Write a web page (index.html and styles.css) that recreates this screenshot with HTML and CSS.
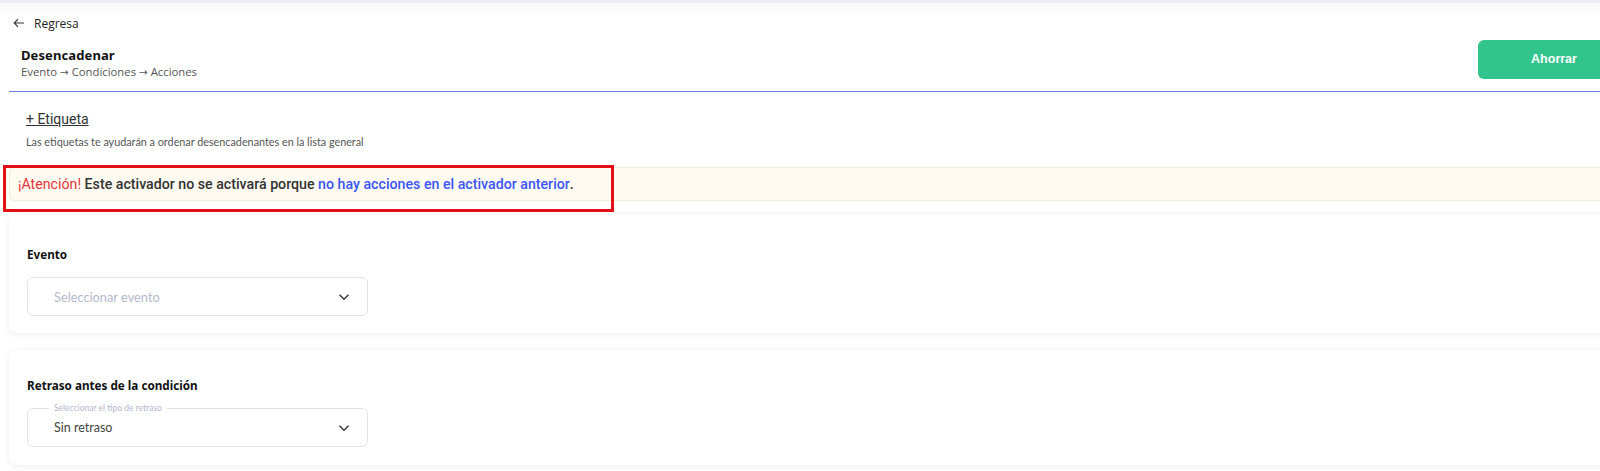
FILE: index.html
```html
<!DOCTYPE html>
<html lang="es">
<head>
<meta charset="utf-8">
<title>Desencadenar</title>
<link rel="stylesheet" href="styles.css">
</head>
<body>
<div class="topstrip"></div>
<div class="page">
  <a class="back" href="#">
    <svg class="back-icon" width="12" height="10" viewBox="0 0 12 10"><path d="M11 5H1.5M5 1.2L1.2 5 5 8.8" fill="none" stroke="#333" stroke-width="1.1"/></svg>
    <span>Regresa</span>
  </a>
  <div class="header">
    <div class="title-block">
      <div class="title">Desencadenar</div>
      <div class="crumbs">Evento <span class="arr">→</span> Condiciones <span class="arr">→</span> Acciones</div>
    </div>
    <button class="save">Ahorrar</button>
  </div>
  <div class="tags">
    <a class="tag-link" href="#">+ Etiqueta</a>
    <div class="tag-help">Las etiquetas te ayudarán a ordenar desencadenantes en la lista general</div>
  </div>
  <div class="warning-wrap">
    <div class="warning"><span class="w-red">¡Atención!</span> Este activador no se activará porque <span class="w-blue">no hay acciones en el activador anterior</span>.</div>
    <div class="annot"></div>
  </div>
  <div class="card card-first">
    <div class="card-title">Evento</div>
    <div class="select">
      <span class="placeholder">Seleccionar evento</span>
      <svg class="chev" width="12" height="8" viewBox="0 0 12 8"><path d="M1.5 1.8L6 6.2 10.5 1.8" fill="none" stroke="#3a3a48" stroke-width="1.5"/></svg>
    </div>
  </div>
  <div class="card card-second">
    <div class="card-title">Retraso antes de la condición</div>
    <div class="select outlined">
      <span class="legend">Seleccionar el tipo de retraso</span>
      <span class="value">Sin retraso</span>
      <svg class="chev" width="12" height="8" viewBox="0 0 12 8"><path d="M1.5 1.8L6 6.2 10.5 1.8" fill="none" stroke="#3a3a48" stroke-width="1.5"/></svg>
    </div>
  </div>
</div>
</body>
</html>
```
FILE: styles.css
```css
* { box-sizing: border-box; }
html, body { margin: 0; padding: 0; background: #ffffff; overflow: hidden; }
body { width: 1600px; height: 471px; font-family: "Open Sans", "Liberation Sans", sans-serif; color: #333; }

.topstrip {
  height: 11px;
  background: #fafafa;
  border-top: 3px solid #ededf5;
}

.page {
  width: 1640px;
  padding-left: 9px;
}

.back {
  display: flex;
  align-items: center;
  gap: 9px;
  height: 24px;
  margin-left: 4px;
  text-decoration: none;
  color: #222;
  font-size: 12px;
}
.back-icon { display: block; }

.header {
  display: flex;
  align-items: center;
  justify-content: space-between;
  height: 57px;
  padding: 0 12px;
  border-bottom: 1px solid #6a7fdc;
}
.title { font-family: "Noto Sans", sans-serif; font-weight: 700; font-size: 13px; color: #111; line-height: 18px; letter-spacing: 0.1px; }
.crumbs { font-size: 11.3px; color: #555; line-height: 16px; }
.arr { font-family: "DejaVu Sans", sans-serif; font-size: 10.5px; }
.save {
  width: 150px;
  height: 39px;
  border: 0;
  border-radius: 6px;
  background: #31c48d;
  color: #fff;
  font-family: "Liberation Sans", Arial, sans-serif;
  font-weight: 700;
  font-size: 12.5px;
  margin-bottom: 8px;
  padding: 0 0 0 2px;
}

.tags { padding: 15px 0 0 17px; }
.tag-link {
  font-family: "Roboto", sans-serif;
  font-size: 14px;
  color: #333;
  text-decoration: underline;
  line-height: 20px;
  display: inline-block;
}
.tag-help {
  font-family: "Lato", sans-serif;
  font-size: 10.8px;
  color: #555;
  line-height: 16px;
  margin-top: 5px;
}

.warning-wrap { position: relative; margin-top: 17px; }
.warning {
  height: 34px;
  display: flex;
  align-items: center;
  padding-left: 8px;
  background: #fffbf0;
  border: 1px solid #f5efd6;
  border-radius: 5px;
  font-family: "Roboto", sans-serif;
  font-weight: 500;
  font-size: 14.2px;
  color: #333;
  white-space: pre;
}
.w-red { color: #e5343a; font-weight: 400; }
.w-blue { color: #3a55f5; }
.annot {
  position: absolute;
  left: -6px;
  top: -2px;
  width: 611px;
  height: 47px;
  border: 3.5px solid #e20f17;
}

.card {
  margin-top: 14px;
  background: #fff;
  border-radius: 8px;
  box-shadow: 0 1px 6px rgba(90, 100, 140, 0.12);
  padding: 30px 0 17px 18px;
}
.card-second { margin-top: 17px; padding-top: 26px; padding-bottom: 18px; }
.card-title {
  font-family: "Noto Sans", sans-serif;
  font-weight: 700;
  font-size: 11.7px;
  color: #111;
  line-height: 18px;
}
.card-first .select { margin-top: 14px; }
.card-second .select { margin-top: 14px; }

.select {
  position: relative;
  width: 341px;
  height: 39px;
  border: 1px solid #e2e2ee;
  border-radius: 6px;
  display: flex;
  align-items: center;
  justify-content: space-between;
  padding: 0 17px 0 26px;
}
.placeholder { font-family: "Lato", sans-serif; font-size: 12.8px; color: #b4b8cc; }
.value { font-family: "Lato", sans-serif; font-size: 12.5px; color: #444; }
.chev { display: block; }
.legend {
  position: absolute;
  left: 21px;
  top: -7px;
  padding: 0 5px;
  background: #fff;
  font-family: "Lato", sans-serif;
  font-size: 8.5px;
  color: #b4b8cc;
  line-height: 12px;
}
```
